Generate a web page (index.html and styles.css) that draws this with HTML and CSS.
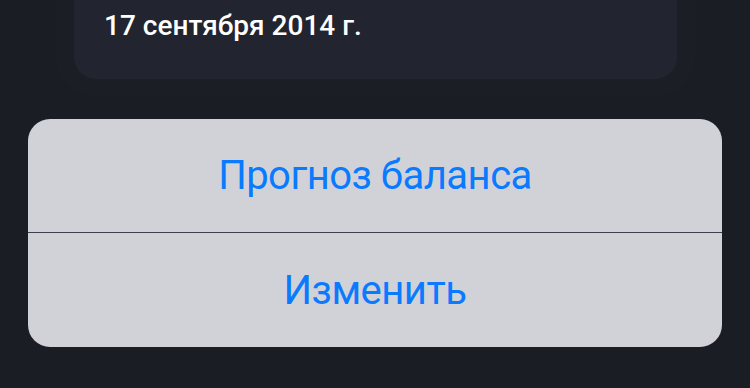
FILE: index.html
```html
<!DOCTYPE html>
<html lang="ru">
<head>
    <meta charset="UTF-8">
    <meta name="viewport" content="width=device-width, initial-scale=1.0">
    <title>Баланс</title>
    <link rel="stylesheet" href="styles.css">
</head>
<body>
    <div class="screen">
        <div class="date-card">
            <div class="date-text">17 сентября 2014 г.</div>
        </div>
        <div class="action-sheet">
            <button class="action-button">Прогноз баланса</button>
            <button class="action-button">Изменить</button>
        </div>
    </div>
</body>
</html>
```

FILE: styles.css
```css
body {
    margin: 0;
    height: 100vh;
    width: 100vw;
    overflow: hidden;
    background-color: #1b1d25;
    font-family: Roboto, "Noto Sans", sans-serif;
}
.screen {
    display: flex;
    flex-direction: column;
}
.date-card {
    height: 79px;
    margin: 0 73px 0 74px;
    padding: 10px 30px 0;
    box-sizing: border-box;
    background-color: #222530;
    border-radius: 0 0 22px 22px;
    box-shadow: 0 0 0 18px rgba(255, 255, 255, 0.008);
}
.date-text {
    font-size: 28px;
    line-height: 32px;
    font-weight: 500;
    color: #ffffff;
}
.action-sheet {
    margin: 40px 28px 0;
    background-color: #d1d2d7;
    border-radius: 22px;
    overflow: hidden;
    display: flex;
    flex-direction: column;
}
.action-button {
    height: 113px;
    border: none;
    background: none;
    padding: 0;
    font-family: inherit;
    font-size: 40px;
    letter-spacing: -0.5px;
    color: #0a7aff;
    cursor: pointer;
}
.action-button + .action-button {
    height: 115px;
    border-top: 1px solid #3a3f54;
}
```
